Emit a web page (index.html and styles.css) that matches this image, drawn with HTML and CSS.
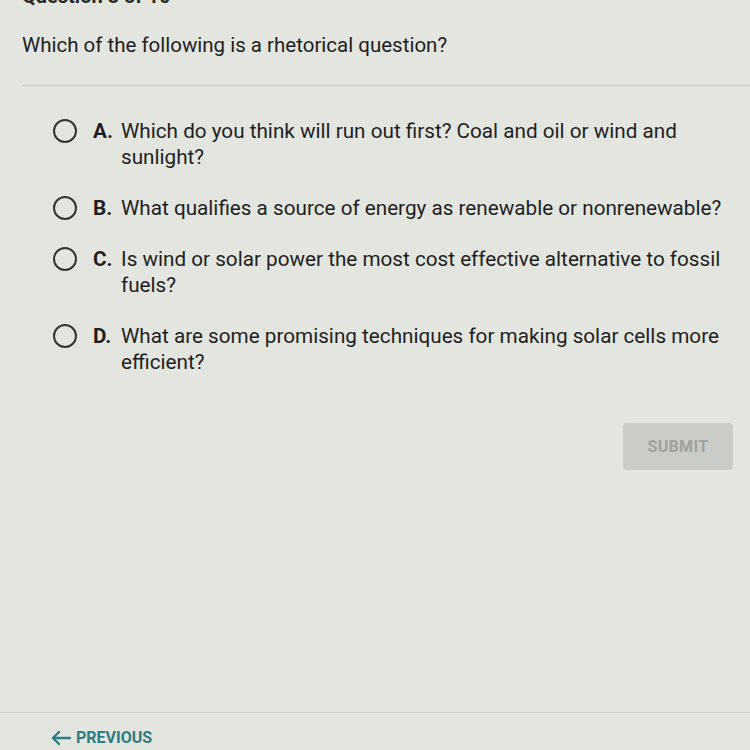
FILE: index.html
```html
<!DOCTYPE html>
<html>
<head>
<meta charset="utf-8">
<link rel="stylesheet" href="styles.css">
</head>
<body>
<div class="page">
  <header class="head">
    <div class="counter">Question 8 of 10</div>
    <div class="question">Which of the following is a rhetorical question?</div>
  </header>
  <div class="rule"></div>
  <ul class="options">
    <li class="option"><span class="radio"></span><span class="letter">A.</span><span class="text">Which do you think will run out first? Coal and oil or wind and sunlight?</span></li>
    <li class="option"><span class="radio"></span><span class="letter">B.</span><span class="text">What qualifies a source of energy as renewable or nonrenewable?</span></li>
    <li class="option"><span class="radio"></span><span class="letter">C.</span><span class="text">Is wind or solar power the most cost effective alternative to fossil fuels?</span></li>
    <li class="option"><span class="radio"></span><span class="letter">D.</span><span class="text">What are some promising techniques for making solar cells more efficient?</span></li>
  </ul>
  <div class="actions"><button class="submit">SUBMIT</button></div>
  <footer class="foot">
    <a class="prev"><svg width="22" height="16" viewBox="0 0 22 16"><path d="M20 8H3M9 2L3 8l6 6" fill="none" stroke="currentColor" stroke-width="2.4" stroke-linecap="round" stroke-linejoin="round"/></svg>PREVIOUS</a>
  </footer>
</div>
</body>
</html>
```
FILE: styles.css
```css
html, body {
  margin: 0;
  padding: 0;
  background: #e3e5df;
  height: 100%;
  overflow: hidden;
}
body {
  font-family: Roboto, "Liberation Sans", sans-serif;
  color: #1f1f1f;
}
.page {
  height: 750px;
  display: flex;
  flex-direction: column;
}
.head {
  padding: 0 0 0 22px;
  height: 85px;
  box-sizing: border-box;
}
.counter {
  font-weight: 700;
  font-size: 20px;
  line-height: 24px;
  margin-top: -16px;
  color: #2a2a2a;
}
.question {
  font-size: 20.5px;
  line-height: 24px;
  margin-top: 25px;
}
.rule {
  height: 1px;
  margin-left: 22px;
  background: #c6c8c2;
}
.options {
  list-style: none;
  margin: 0;
  padding: 32px 20px 0 53px;
  display: flex;
  flex-direction: column;
  gap: 25px;
}
.option {
  display: flex;
  align-items: flex-start;
  font-size: 20.7px;
  line-height: 26px;
}
.radio {
  width: 20px;
  height: 20px;
  border: 2.5px solid #333;
  border-radius: 50%;
  flex: none;
  margin-top: 1px;
}
.letter {
  font-weight: 700;
  width: 28px;
  margin-left: 16px;
  flex: none;
}
.text {
  flex: 1;
}
.actions {
  display: flex;
  justify-content: flex-end;
  padding: 48px 17px 0 0;
}
.submit {
  width: 110px;
  height: 47px;
  border: none;
  border-radius: 4px;
  background: #c9ccc7;
  color: #9fa29e;
  font-family: Roboto, "Liberation Sans", sans-serif;
  font-weight: 700;
  font-size: 16px;
  letter-spacing: 0.3px;
}
.foot {
  margin-top: auto;
  border-top: 1px solid #d2d4cf;
  height: 38px;
  box-sizing: border-box;
  padding: 15px 0 0 50px;
}
.prev {
  display: inline-flex;
  align-items: center;
  gap: 4px;
  color: #2e7c85;
  font-weight: 700;
  font-size: 16px;
  line-height: 20px;
}
```
